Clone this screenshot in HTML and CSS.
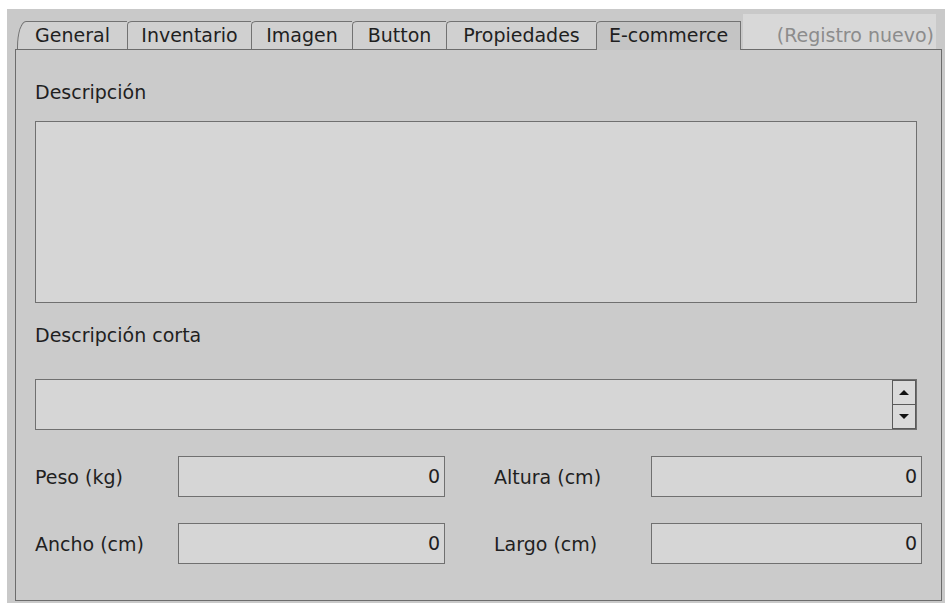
FILE: index.html
```html
<!DOCTYPE html>
<html lang="es">
<head>
<meta charset="utf-8">
<title>Producto - E-commerce</title>
<link rel="stylesheet" href="styles.css">
</head>
<body>
<div class="window">
  <div class="tabbar">
    <div class="tab tab-first tab-general">General</div>
    <div class="tab tab-inventario">Inventario</div>
    <div class="tab tab-imagen">Imagen</div>
    <div class="tab tab-button">Button</div>
    <div class="tab tab-propiedades">Propiedades</div>
    <div class="tab tab-selected tab-ecommerce">E-commerce</div>
    <div class="status">(Registro nuevo)</div>
  </div>
  <div class="panel">
    <div class="label">Descripción</div>
    <div class="textarea"></div>
    <div class="label label-short">Descripción corta</div>
    <div class="shortfield">
      <div class="spin">
        <div class="spin-btn"><span class="arrow arrow-up"></span></div>
        <div class="spin-btn"><span class="arrow arrow-down"></span></div>
      </div>
    </div>
    <div class="measures">
      <div class="m-label">Peso (kg)</div>
      <div class="num">0</div>
      <div class="spacer"></div>
      <div class="m-label">Altura (cm)</div>
      <div class="num">0</div>

      <div class="m-label">Ancho (cm)</div>
      <div class="num">0</div>
      <div class="spacer"></div>
      <div class="m-label">Largo (cm)</div>
      <div class="num">0</div>
    </div>
  </div>
</div>
</body>
</html>
```

FILE: styles.css
```css
html, body {
  margin: 0;
  padding: 0;
  background: #ffffff;
}

.window {
  box-sizing: border-box;
  margin: 9px 0 0 7px;
  width: 938px;
  height: 594px;
  padding: 0 3px 3px 8px;
  background: #c9c9c9;
  font-family: "DejaVu Sans", "Liberation Sans", sans-serif;
  font-size: 19px;
  color: #1f1f1f;
}

/* ---- tab strip ---- */
.tabbar {
  display: flex;
  align-items: flex-end;
  height: 40px;
  padding-left: 2px;
}

.tab {
  box-sizing: border-box;
  height: 28px;
  line-height: 27px;
  text-align: center;
  background: #d0d0d0;
  border-top: 1px solid #727272;
  border-left: 1px solid #727272;
  border-top-left-radius: 5px 4px;
  white-space: nowrap;
}

.tab-first {
  border-top-left-radius: 9px 26px;
}

.tab-general { width: 110px; }
.tab-inventario { width: 124px; }
.tab-imagen { width: 101px; }
.tab-button { width: 94px; }
.tab-propiedades { width: 150px; }
.tab-ecommerce { width: 145px; }

.tab-selected {
  position: relative;
  z-index: 1;
  height: 29px;
  margin-bottom: -1px;
  padding-bottom: 1px;
  background: #c4c4c4;
  border-right: 1px solid #727272;
}

.status {
  box-sizing: border-box;
  width: 193px;
  height: 35px;
  margin-left: 2px;
  padding: 8px 2px 0 0;
  line-height: 27px;
  text-align: right;
  background: #d8d8d8;
  color: #8c8c8c;
  white-space: nowrap;
}

/* ---- page body ---- */
.panel {
  box-sizing: border-box;
  width: 927px;
  height: 552px;
  border: 1px solid #6c6c6c;
  background: #cbcbcb;
  padding: 31px 0 0 19px;
}

.label {
  line-height: 22px;
  height: 22px;
}

.textarea {
  box-sizing: border-box;
  width: 882px;
  height: 182px;
  margin-top: 18px;
  border: 1px solid #707070;
  background: #d6d6d6;
}

.label-short {
  margin-top: 21px;
}

.shortfield {
  box-sizing: border-box;
  display: flex;
  justify-content: flex-end;
  width: 882px;
  height: 51px;
  margin-top: 33px;
  border: 1px solid #707070;
  background: #d6d6d6;
}

.spin {
  display: flex;
  flex-direction: column;
  width: 24px;
}

.spin-btn {
  box-sizing: border-box;
  flex: 1;
  display: flex;
  align-items: center;
  justify-content: center;
  border: 1px solid #5a5a5a;
  background: #dadada;
}

.spin-btn + .spin-btn {
  border-top: none;
}

.arrow {
  width: 0;
  height: 0;
  border-left: 5px solid transparent;
  border-right: 5px solid transparent;
}

.arrow-up {
  border-bottom: 5px solid #111111;
}

.arrow-down {
  border-top: 5px solid #111111;
}

/* ---- measures grid ---- */
.measures {
  display: grid;
  grid-template-columns: 143px 267px 49px 157px 271px;
  grid-auto-rows: 41px;
  row-gap: 26px;
  align-items: center;
  margin-top: 26px;
}

.m-label {
  line-height: 22px;
  white-space: nowrap;
}

.num {
  box-sizing: border-box;
  height: 41px;
  line-height: 39px;
  padding-right: 4px;
  text-align: right;
  border: 1px solid #707070;
  background: #d6d6d6;
}
```
